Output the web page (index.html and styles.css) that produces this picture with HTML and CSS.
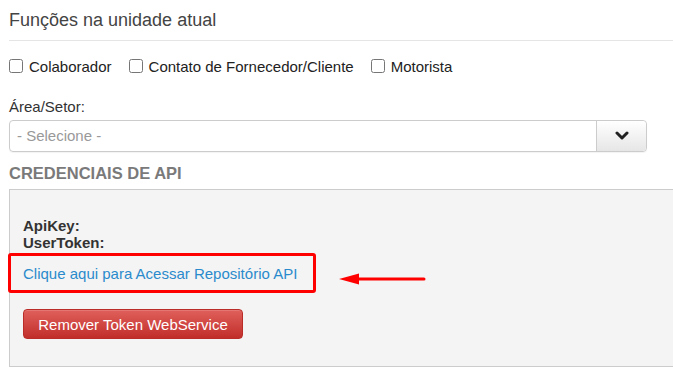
FILE: index.html
```html
<!DOCTYPE html>
<html lang="pt-BR">
<head>
    <meta charset="UTF-8">
    <title>Funções na unidade atual</title>
    <link rel="stylesheet" href="styles.css">
</head>
<body>
    <div class="page">
        <h2 class="section-title">Funções na unidade atual</h2>
        <div class="roles">
            <label><input type="checkbox"> Colaborador</label>
            <label><input type="checkbox"> Contato de Fornecedor/Cliente</label>
            <label><input type="checkbox"> Motorista</label>
        </div>

        <label class="field-label">Área/Setor:</label>
        <div class="select-box">
            <div class="select-value">- Selecione -</div>
            <button class="select-btn" type="button">
                <svg width="14" height="10" viewBox="0 0 14 10"><polyline points="2,2 7,7 12,2" fill="none" stroke="#222" stroke-width="3" stroke-linecap="round" stroke-linejoin="round"/></svg>
            </button>
        </div>

        <h3 class="cred-title">CREDENCIAIS DE API</h3>
        <div class="cred-panel">
            <div class="cred-line"><b>ApiKey:</b></div>
            <div class="cred-line"><b>UserToken:</b></div>
            <div class="link-row">
                <span class="highlight"></span>
                <a href="#" class="api-link">Clique aqui para Acessar Repositório API</a>
                <svg class="arrow" width="88" height="12" viewBox="0 0 88 12"><polygon points="0,6 20,0.5 20,11.5" fill="#f00"/><line x1="18" y1="6" x2="85" y2="6" stroke="#f00" stroke-width="3" stroke-linecap="round"/></svg>
            </div>
            <button class="btn-danger" type="button">Remover Token WebService</button>
        </div>
    </div>
</body>
</html>
```

FILE: styles.css
```css
html, body { margin: 0; padding: 0; background: #fff; overflow: hidden; }
body { font-family: "Liberation Sans", Arial, sans-serif; font-size: 15px; color: #333; }
.page { width: 700px; padding-left: 9px; }
.section-title { margin: 0; padding: 10px 0 9px; font-size: 18px; font-weight: normal; line-height: 21px; color: #444; border-bottom: 1px solid #e5e5e5; }
.roles { display: flex; gap: 17px; padding-top: 15px; height: 20px; align-items: center; }
.roles label { display: flex; align-items: center; gap: 6px; color: #222; }
.roles input { margin: 0; width: 14px; height: 14px; }
.field-label { display: block; margin-top: 22px; line-height: 17px; color: #333; }
.select-box { display: flex; width: 638px; height: 32px; margin-top: 5px; border: 1px solid #ccc; border-radius: 4px; box-sizing: border-box; box-shadow: 0 1px 1px rgba(0,0,0,0.05); }
.select-value { flex: 1; padding-left: 7px; line-height: 30px; color: #999; }
.select-btn { width: 50px; border: none; border-left: 1px solid #ccc; border-radius: 0 4px 4px 0; background: linear-gradient(#fff, #e6e6e6); display: flex; align-items: center; justify-content: center; padding: 0; }
.cred-title { margin: 11px 0 0; font-size: 16.5px; line-height: 20px; color: #7a7a7a; }
.cred-panel { margin-top: 6px; background: #f4f4f4; border: 1px solid #ccc; padding: 27px 0 27px 13px; }
.cred-line { line-height: 17px; color: #333; }
.link-row { position: relative; display: flex; align-items: center; height: 40px; margin-top: 2px; }
.api-link { color: #2a8bcc; text-decoration: none; }
.highlight { position: absolute; left: -15px; top: 0; width: 308px; height: 40px; box-sizing: border-box; border: 3px solid #f00; border-radius: 3px; }
.arrow { position: absolute; left: 316px; top: 20px; }
.btn-danger { display: block; margin-top: 16px; height: 30px; width: 220px; padding: 0; font-family: inherit; font-size: 15px; color: #fff; border: 1px solid #b92c28; border-radius: 4px; background: linear-gradient(#e0605b, #c12e2a); box-shadow: inset 0 1px 0 rgba(255,255,255,0.15); }
```
